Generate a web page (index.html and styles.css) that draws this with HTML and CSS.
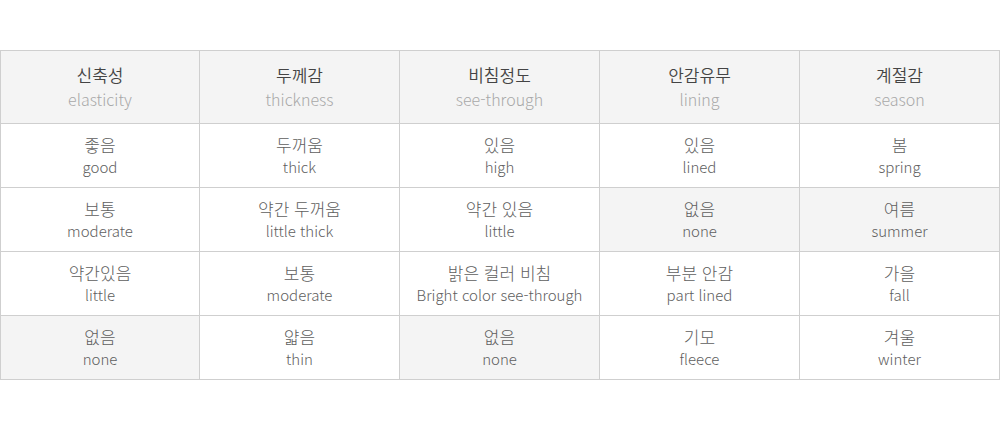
FILE: index.html
```html
<!DOCTYPE html>
<html lang="ko">
<head>
<meta charset="utf-8">
<link rel="stylesheet" href="styles.css">
</head>
<body>
<div class="spec">
  <div class="cell head"><span class="ko">신축성</span><span class="en">elasticity</span></div>
  <div class="cell head"><span class="ko">두께감</span><span class="en">thickness</span></div>
  <div class="cell head"><span class="ko">비침정도</span><span class="en">see-through</span></div>
  <div class="cell head"><span class="ko">안감유무</span><span class="en">lining</span></div>
  <div class="cell head"><span class="ko">계절감</span><span class="en">season</span></div>

  <div class="cell"><span class="ko">좋음</span><span class="en">good</span></div>
  <div class="cell"><span class="ko">두꺼움</span><span class="en">thick</span></div>
  <div class="cell"><span class="ko">있음</span><span class="en">high</span></div>
  <div class="cell"><span class="ko">있음</span><span class="en">lined</span></div>
  <div class="cell"><span class="ko">봄</span><span class="en">spring</span></div>

  <div class="cell"><span class="ko">보통</span><span class="en">moderate</span></div>
  <div class="cell"><span class="ko">약간 두꺼움</span><span class="en">little thick</span></div>
  <div class="cell"><span class="ko">약간 있음</span><span class="en">little</span></div>
  <div class="cell on"><span class="ko">없음</span><span class="en">none</span></div>
  <div class="cell on"><span class="ko">여름</span><span class="en">summer</span></div>

  <div class="cell"><span class="ko">약간있음</span><span class="en">little</span></div>
  <div class="cell"><span class="ko">보통</span><span class="en">moderate</span></div>
  <div class="cell"><span class="ko">밝은 컬러 비침</span><span class="en">Bright color see-through</span></div>
  <div class="cell"><span class="ko">부분 안감</span><span class="en">part lined</span></div>
  <div class="cell"><span class="ko">가을</span><span class="en">fall</span></div>

  <div class="cell on"><span class="ko">없음</span><span class="en">none</span></div>
  <div class="cell"><span class="ko">얇음</span><span class="en">thin</span></div>
  <div class="cell on"><span class="ko">없음</span><span class="en">none</span></div>
  <div class="cell"><span class="ko">기모</span><span class="en">fleece</span></div>
  <div class="cell"><span class="ko">겨울</span><span class="en">winter</span></div>
</div>
</body>
</html>
```

FILE: styles.css
```css
html, body {
  margin: 0;
  padding: 0;
  background: #fff;
}
body {
  font-family: "Noto Sans CJK KR", "Noto Sans", sans-serif;
  padding-top: 50px;
}
.spec {
  width: 1000px;
  box-sizing: border-box;
  display: grid;
  grid-template-columns: 199px 200px 200px 200px 200px;
  grid-template-rows: 73px repeat(4, 64px);
  border-top: 1px solid #cfcfcf;
  border-left: 1px solid #cfcfcf;
}
.cell {
  border-right: 1px solid #cfcfcf;
  border-bottom: 1px solid #cfcfcf;
  display: flex;
  flex-direction: column;
  align-items: center;
  justify-content: center;
  color: #666;
}
.cell.on, .cell.head {
  background: #f4f4f4;
}
.ko {
  font-size: 17px;
  line-height: 22px;
  font-weight: 300;
  color: #5e5e5e;
}
.en {
  font-size: 15px;
  line-height: 22px;
  font-weight: 300;
  color: #5e5e5e;
}
.head .ko {
  font-size: 17px;
  line-height: 24px;
  font-weight: 350;
  color: #444;
}
.head .en {
  font-size: 16px;
  line-height: 24px;
  font-weight: 300;
  color: #a8a8a8;
}
```
